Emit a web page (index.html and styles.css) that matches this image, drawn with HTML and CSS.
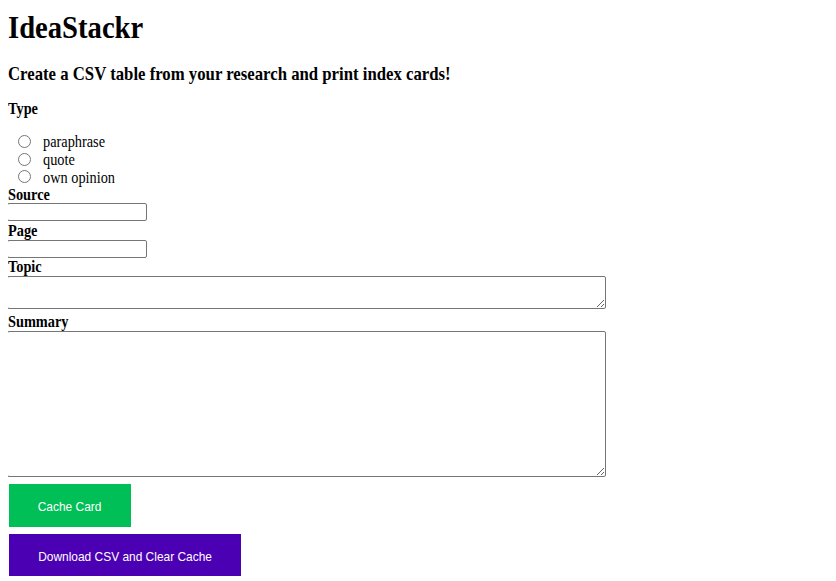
FILE: index.html
```html
<!DOCTYPE html>
<html lang="en">
<head>
<meta charset="utf-8">
<title>IdeaStackr</title>
<link rel="stylesheet" href="styles.css">
</head>
<body>
<h1 class="title"><span class="narrow">IdeaStackr</span></h1>
<h3 class="subtitle"><span class="narrow">Create a CSV table from your research and print index cards!</span></h3>
<form class="card-form">
  <div class="field-label type-label"><span class="narrow">Type</span></div>
  <div class="radio-group">
    <label class="radio-row"><input type="radio" name="type" value="paraphrase" class="radio"><span class="narrow">paraphrase</span></label>
    <label class="radio-row"><input type="radio" name="type" value="quote" class="radio"><span class="narrow">quote</span></label>
    <label class="radio-row"><input type="radio" name="type" value="opinion" class="radio"><span class="narrow">own opinion</span></label>
  </div>
  <label class="field-label source-label" for="source"><span class="narrow">Source</span></label>
  <input id="source" class="text-input source-input" type="text">
  <label class="field-label page-label" for="page"><span class="narrow">Page</span></label>
  <input id="page" class="text-input page-input" type="text">
  <label class="field-label topic-label" for="topic"><span class="narrow">Topic</span></label>
  <textarea id="topic" class="area topic-area"></textarea>
  <label class="field-label summary-label" for="summary"><span class="narrow">Summary</span></label>
  <textarea id="summary" class="area summary-area"></textarea>
  <button type="button" class="btn btn-cache"><span class="narrow-c">Cache Card</span></button>
  <button type="button" class="btn btn-download"><span class="narrow-c">Download CSV and Clear Cache</span></button>
</form>
</body>
</html>
```

FILE: styles.css
```css
html, body {
  background: #ffffff;
}
body {
  margin: 8px;
  font-family: "Liberation Serif", "Times New Roman", serif;
  font-size: 16px;
  color: #000000;
}
.narrow {
  display: inline-block;
  transform: scaleX(0.895);
  transform-origin: left center;
  white-space: nowrap;
}
.narrow-c {
  display: inline-block;
  transform: scaleX(0.895);
  transform-origin: center center;
  white-space: nowrap;
}
.title {
  font-size: 32px;
  font-weight: bold;
  line-height: 37px;
  margin: 1px 0 0 0;
}
.subtitle {
  font-size: 18.72px;
  font-weight: bold;
  line-height: 22px;
  margin: 17px 0 0 0;
}
.card-form {
  display: flex;
  flex-direction: column;
  align-items: flex-start;
}
.field-label {
  display: block;
  font-weight: bold;
  line-height: 14px;
  padding-top: 2px;
}
.type-label {
  margin-top: 15.2px;
}
.radio-group {
  display: flex;
  flex-direction: column;
  margin-top: 17px;
}
.radio-row {
  display: flex;
  align-items: center;
  height: 17.7px;
  line-height: 17.7px;
}
.radio {
  width: 13px;
  height: 13px;
  margin: -1px 12px 0 10px;
}
.source-label {
  margin-top: 0;
}
.text-input {
  box-sizing: border-box;
  width: 140px;
  height: 18.6px;
  margin: 2px 0 0 -1px;
  border: 1px solid #767676;
  border-radius: 2px;
  padding: 1px 2px;
  font-size: 13.33px;
}
.source-input {
  margin-top: 0.6px;
}
.page-label {
  margin-top: 0.2px;
}
.topic-label {
  margin-top: 0.2px;
}
.area {
  box-sizing: border-box;
  width: 599px;
  margin: 2px 0 0 -1px;
  border: 1px solid #767676;
  border-radius: 2px;
  padding: 2px;
  font-family: "Liberation Mono", monospace;
  font-size: 13.33px;
}
.topic-area {
  height: 33px;
}
.summary-label {
  margin-top: 3.5px;
}
.summary-area {
  height: 146px;
}
.btn {
  box-sizing: border-box;
  height: 42.4px;
  margin: 7.3px 0 0 1px;
  padding: 2px 0 0 0;
  border: none;
  border-radius: 0;
  font-family: "Liberation Sans", Arial, sans-serif;
  font-size: 13.33px;
  color: #ffffff;
  cursor: pointer;
  text-align: center;
}
.btn-cache {
  width: 122px;
  background: #00bf56;
}
.btn-download {
  width: 232px;
  background: #4c00b4;
}
```
